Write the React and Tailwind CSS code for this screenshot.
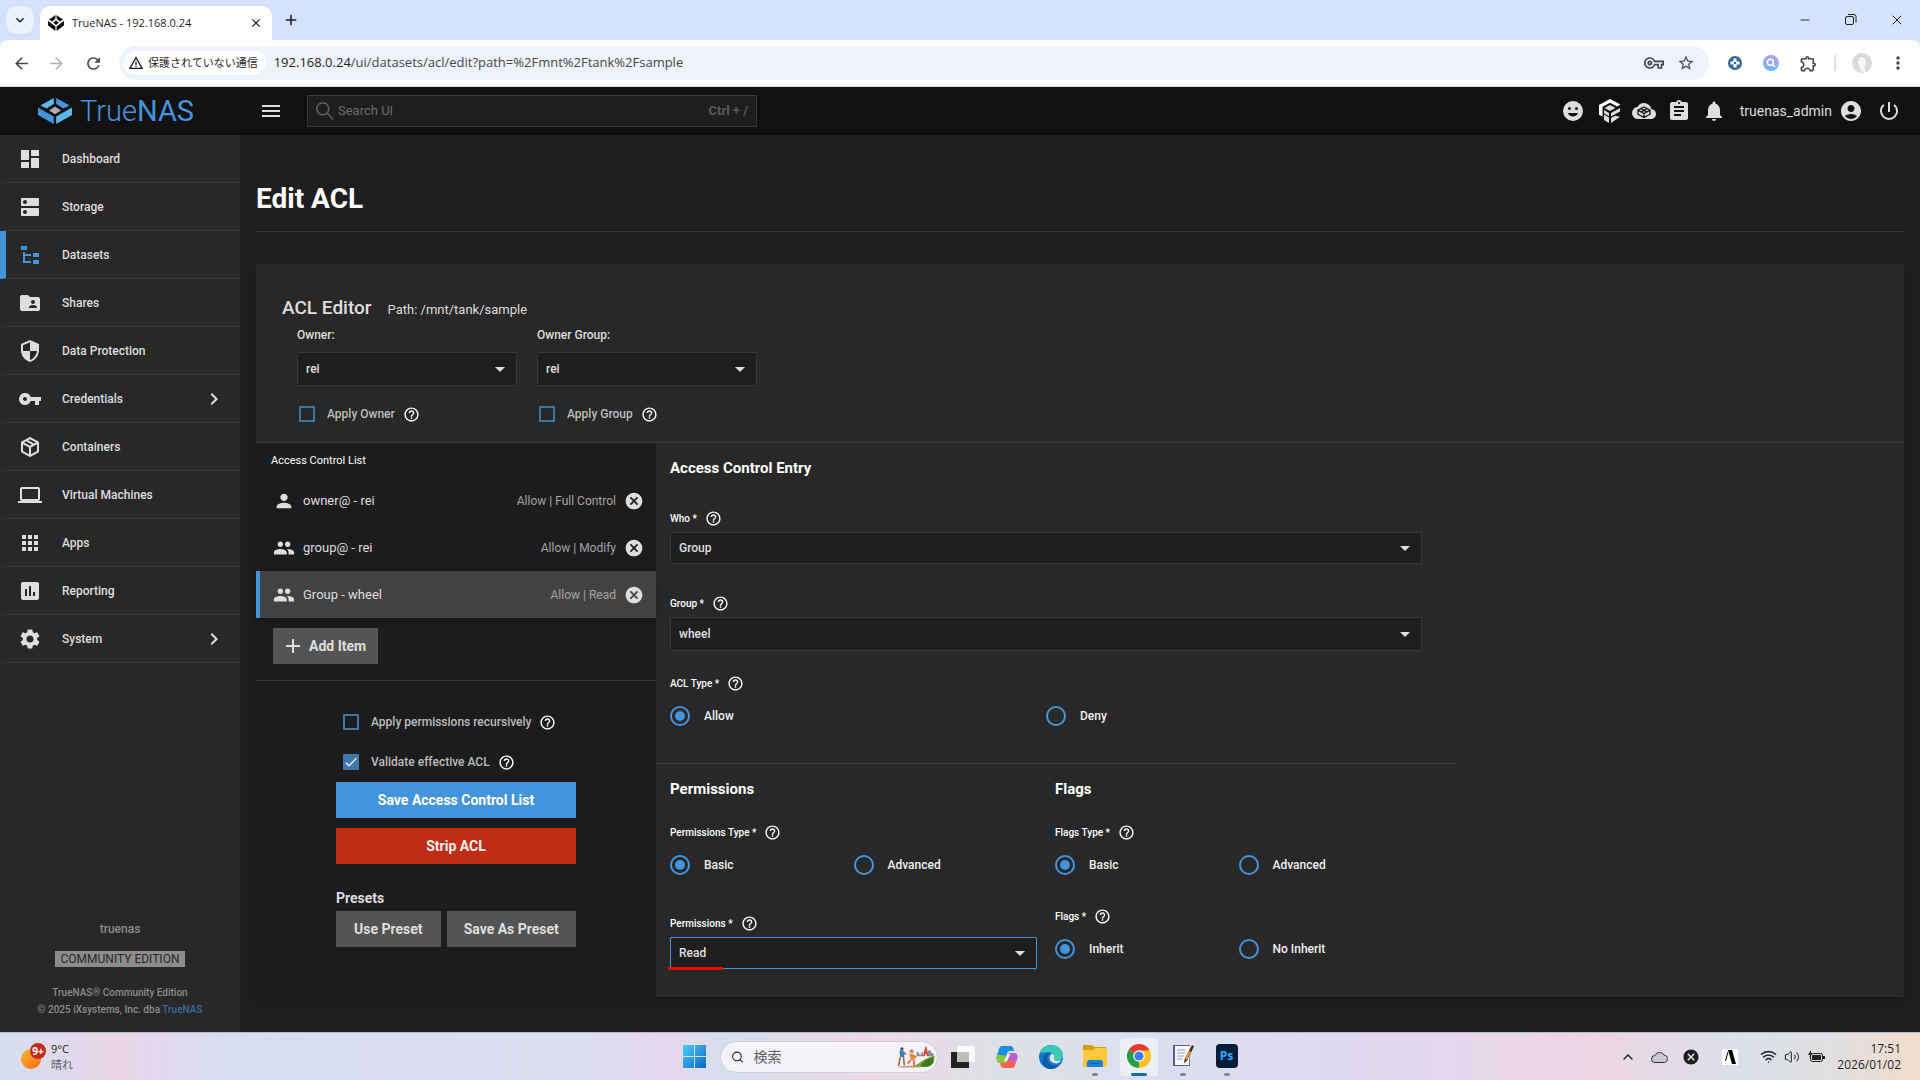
import React, { useState } from "react";
import {
  MdDashboard,
  MdDns,
  MdFolderShared,
  MdSecurity,
  MdVpnKey,
  MdLaptop,
  MdApps,
  MdAssessment,
  MdSettings,
  MdChevronRight,
  MdHelpOutline,
  MdCancel,
  MdPerson,
  MdPeople,
  MdAdd,
  MdMenu,
  MdAssignment,
  MdNotifications,
  MdAccountCircle,
  MdPowerSettingsNew,
  MdArrowBack,
  MdArrowForward,
  MdRefresh,
  MdClose,
  MdMoreVert,
  MdStarOutline,
  MdOutlineExtension,
  MdOutlineVpnKey,
  MdKeyboardArrowDown,
  MdWarningAmber,
} from "react-icons/md";
import { Wifi, Volume2, ChevronUp, Search, Minus, X } from "lucide-react";

const TreeIcon = () => (
  <svg viewBox="0 0 24 24" className="size-6" fill="currentColor">
    <path d="M3,3H9V7H3V3M15,10H21V14H15V10M15,17H21V21H15V17M13,13H7V18H13V20H7L5,20V9H7V11H13V13Z" />
  </svg>
);

const PackageIcon = () => (
  <svg viewBox="0 0 24 24" className="size-6" fill="currentColor">
    <path d="M21,16.5C21,16.88 20.79,17.21 20.47,17.38L12.57,21.82C12.41,21.94 12.21,22 12,22C11.79,22 11.59,21.94 11.43,21.82L3.53,17.38C3.21,17.21 3,16.88 3,16.5V7.5C3,7.12 3.21,6.79 3.53,6.62L11.43,2.18C11.59,2.06 11.79,2 12,2C12.21,2 12.41,2.06 12.57,2.18L20.47,6.62C20.79,6.79 21,7.12 21,7.5V16.5M12,4.15L10.11,5.22L16,8.61L17.96,7.5L12,4.15M6.04,7.5L12,10.85L13.96,9.75L8.08,6.35L6.04,7.5M5,15.91L11,19.29V12.58L5,9.21V15.91M19,15.91V9.21L13,12.58V19.29L19,15.91Z" />
  </svg>
);

const navItems = [
  { label: "Dashboard", icon: <MdDashboard size={24} /> },
  { label: "Storage", icon: <MdDns size={24} /> },
  { label: "Datasets", icon: <TreeIcon />, active: true },
  { label: "Shares", icon: <MdFolderShared size={24} /> },
  { label: "Data Protection", icon: <MdSecurity size={24} /> },
  { label: "Credentials", icon: <MdVpnKey size={24} />, children: true },
  { label: "Containers", icon: <PackageIcon /> },
  { label: "Virtual Machines", icon: <MdLaptop size={24} /> },
  { label: "Apps", icon: <MdApps size={24} /> },
  { label: "Reporting", icon: <MdAssessment size={24} /> },
  { label: "System", icon: <MdSettings size={24} />, children: true },
];

const entries = [
  { name: "owner@ - rei", access: "Allow | Full Control", icon: <MdPerson size={22} /> },
  { name: "group@ - rei", access: "Allow | Modify", icon: <MdPeople size={22} /> },
  { name: "Group - wheel", access: "Allow | Read", icon: <MdPeople size={22} /> },
];

function Cube({ className, colors }) {
  return (
    <svg viewBox="0 0 34 26" className={className} preserveAspectRatio="none">
      <path d="M15.8 0 L15.8 6 L8.6 10.6 L2.4 7.4 Z" fill={colors[0]} />
      <path d="M18.2 0 L31.6 7.4 L25.4 10.6 L18.2 6 Z" fill={colors[1]} />
      <path d="M0 9.4 L15.8 18.6 L15.8 26 L0 17 Z" fill={colors[1]} />
      <path d="M34 9.4 L18.2 18.6 L18.2 26 L34 17 Z" fill={colors[0]} />
      <path d="M17 8.6 L23 12.4 L17 16.2 L11 12.4 Z" fill={colors[2]} />
    </svg>
  );
}

function BrowserChrome() {
  return (
    <div className="bg-[#d5e2fe] font-['Open_Sans','Noto_Sans_CJK_JP',sans-serif] text-[#1f1f1f]">
      <div className="flex h-10 items-end pl-[6px]">
        <button
          aria-label="Search tabs"
          className="mb-[6px] mr-[6px] flex h-7 w-7 items-center justify-center rounded-[10px] bg-[#e9f0fe]"
        >
          <MdKeyboardArrowDown size={16} />
        </button>
        <div className="flex h-[34px] w-[232px] items-center rounded-t-[10px] bg-white pl-2 pr-[9px]">
          <Cube className="h-4 w-4" colors={["#111", "#111", "#111"]} />
          <span className="ml-2 grow text-[11px]">TrueNAS - 192.168.0.24</span>
          <button aria-label="Close tab">
            <MdClose size={14} />
          </button>
        </div>
        <button aria-label="New tab" className="mb-[11px] ml-[10px]">
          <MdAdd size={18} />
        </button>
        <div className="grow" />
        <button aria-label="Minimize" className="flex h-10 w-[46px] items-center justify-center">
          <Minus size={14} strokeWidth={1.5} />
        </button>
        <button aria-label="Restore" className="flex h-10 w-[46px] items-center justify-center">
          <svg viewBox="0 0 12 12" className="size-3" fill="none" stroke="currentColor">
            <rect x="0.5" y="2.5" width="8" height="8" rx="1.5" />
            <path d="M3 .5h6a2 2 0 0 1 2 2v6" />
          </svg>
        </button>
        <button aria-label="Close" className="flex h-10 w-[46px] items-center justify-center">
          <X size={16} strokeWidth={1.5} />
        </button>
      </div>
      <div className="flex h-[47px] items-center rounded-t-[8px] border-b border-[#dadce0] bg-white px-3 text-[#474747]">
        <button aria-label="Back">
          <MdArrowBack size={19} />
        </button>
        <button aria-label="Forward" className="ml-4 text-[#b0b0b0]">
          <MdArrowForward size={19} />
        </button>
        <button aria-label="Reload" className="ml-[18px]">
          <MdRefresh size={19} />
        </button>
        <div className="ml-4 flex h-[34px] grow items-center rounded-full bg-[#edf2fb] pl-[5px] pr-[14px]">
          <span className="flex h-6 items-center rounded-full bg-white pl-1 pr-2 text-[11px] text-[#1f1f1f]">
            <MdWarningAmber size={16} className="mr-1" />
            保護されていない通信
          </span>
          <span className="ml-2 grow text-[13px] text-[#474747]">
            <span className="text-[#1f1f1f]">192.168.0.24</span>
            /ui/datasets/acl/edit?path=%2Fmnt%2Ftank%2Fsample
          </span>
          <MdOutlineVpnKey size={20} />
          <MdStarOutline size={18} className="ml-[13px]" />
        </div>
        <svg viewBox="0 0 14 14" className="ml-[19px] size-[14px]">
          <circle cx="7" cy="7" r="7" fill="#336699" />
          <path d="M5.4 2.5h3.2v2.9h2.9v3.2H8.6v2.9H5.4V8.6H2.5V5.4h2.9z" fill="#fff" />
          <circle cx="7" cy="7" r="1.3" fill="#336699" />
        </svg>
        <svg viewBox="0 0 16 16" className="ml-[21px] size-4">
          <defs>
            <linearGradient id="ext" x1="0" y1="0" x2="0" y2="1">
              <stop offset="0" stopColor="#b79cf5" />
              <stop offset="1" stopColor="#6cb8fb" />
            </linearGradient>
          </defs>
          <circle cx="8" cy="8" r="8" fill="url(#ext)" />
          <circle cx="7.3" cy="7.3" r="3" fill="none" stroke="#fff" strokeWidth="1.5" />
          <path d="M9.5 9.5l2.5 2.5" stroke="#fff" strokeWidth="1.5" />
        </svg>
        <MdOutlineExtension size={19} className="ml-5" />
        <span className="ml-4 h-4 w-[2px] bg-[#d3e3fd]" />
        <svg viewBox="0 0 20 20" className="ml-4 size-5">
          <circle cx="10" cy="10" r="10" fill="#d9d9d9" />
          <path d="M10 4c3 0 4 2 4 5 0 2-1 3-1.5 4l1 6h-4L7.500 14C6.500 12 6 11 6 9c0-3 1-5 4-5z" fill="#f5f5f5" />
        </svg>
        <MdMoreVert size={20} className="ml-4" />
      </div>
    </div>
  );
}

function TopBar() {
  return (
    <header className="flex h-12 shrink-0 items-center bg-[#111111] pr-[19px] text-[#dedede]">
      <a href="#home" className="flex w-60 items-center pl-[38px] text-[29px] leading-10 text-[#4494dc]">
        <Cube className="mr-2 h-[26px] w-[34px]" colors={["#5bb9ea", "#4494dc", "#aeadae"]} />
        <span className="font-light">True</span>NAS
      </a>
      <button aria-label="Toggle menu" className="ml-[19px]">
        <MdMenu size={24} />
      </button>
      <label className="ml-6 flex h-8 w-[450px] items-center border border-[#383838] bg-[#1e1e1e] px-2 text-[#6c6c6c]">
        <svg viewBox="0 0 18 18" className="size-[18px]" fill="none" stroke="#5f5f5f" strokeWidth="1.6">
          <circle cx="6.8" cy="6.8" r="6" />
          <path d="M11.2 11.2l6 6" />
        </svg>
        <input
          aria-label="Search UI"
          placeholder="Search UI"
          className="ml-1 min-w-0 grow bg-transparent text-[13px] placeholder:text-[#6c6c6c]"
        />
        <span className="text-[13px] font-bold text-[#5a5a5a]">Ctrl + /</span>
      </label>
      <div className="grow" />
      <div className="flex items-center">
        <button aria-label="Feedback">
          <svg viewBox="0 0 24 24" className="size-6" fill="currentColor" fillRule="evenodd">
            <path d="M12 2a10 10 0 1 0 0 20a10 10 0 1 0 0-20zM8.5 8a1.5 1.5 0 1 1 0 3a1.5 1.5 0 1 1 0-3zM15.5 8a1.5 1.5 0 1 1 0 3a1.5 1.5 0 1 1 0-3zM6.9 14h10.2a5.5 5.5 0 0 1-10.2 0z" />
          </svg>
        </button>
        <button aria-label="TrueCommand" className="ml-[14px]">
          <svg viewBox="0 0 22 24" className="h-6 w-[22px]">
            <path d="M11 0L21.5 5.5L18 7.5L11 3.8L3.5 7.8V17.5L0 15.7V6z" fill="#fff" />
            <path d="M11 6l5.5 3-5.5 3-5.5-3z" fill="#dedede" />
            <path d="M5 11l5 3v3.2l-5-3zM5 15.5l5 3V24l-5-3zM12 14l9-5v3.4l-9 5zM12 19l4-2.3 5 1L12 24z" fill="#dedede" />
          </svg>
        </button>
        <button aria-label="TrueNAS Connect" className="ml-[11px]">
          <svg viewBox="0 0 24 24" className="size-6" fill="currentColor">
            <path d="M19.35 10.04A7.49 7.49 0 0 0 12 4C9.11 4 6.6 5.64 5.35 8.04A5.994 5.994 0 0 0 0 14c0 3.31 2.69 6 6 6h13c2.76 0 5-2.24 5-5 0-2.64-2.05-4.78-4.65-4.96z" />
            <path
              d="M12 8l6 3.2v4L12 18.5l-6-3.3v-4zM6 11.2l6 3.3 6-3.3M12 14.5v4M9 9.6l6 3.4M15 9.6L9 13"
              fill="none"
              stroke="#111"
              strokeWidth="1.3"
            />
          </svg>
        </button>
        <button aria-label="Jobs" className="ml-[11px]">
          <MdAssignment size={24} />
        </button>
        <button aria-label="Alerts" className="ml-[11px]">
          <MdNotifications size={24} />
        </button>
        <button className="ml-[14px] flex items-center text-[14px]">
          truenas_admin
          <MdAccountCircle size={24} className="ml-[7px]" />
        </button>
        <button aria-label="Power" className="ml-[14px]">
          <MdPowerSettingsNew size={24} />
        </button>
      </div>
    </header>
  );
}

function Sidebar() {
  return (
    <aside className="flex w-60 shrink-0 flex-col bg-[#282828] text-[12px] font-medium text-[#dedede] shadow-lg">
      <nav>
        {navItems.map((item) => (
          <a
            key={item.label}
            href={`#${item.label}`}
            className={`flex h-12 items-center border-b border-b-[#383838] border-l-[6px] pr-[14px] pl-3 ${
              item.active ? "border-l-[#4494dc]" : "border-l-[#282828]"
            }`}
          >
            <span className={item.active ? "text-[#4494dc]" : ""}>{item.icon}</span>
            <span className="ml-5 grow">{item.label}</span>
            {item.children && <MdChevronRight size={24} />}
          </a>
        ))}
      </nav>
      <div className="mt-auto flex flex-col items-center pb-[14px] text-[#8c8c8c]">
        <span className="leading-5">truenas</span>
        <span className="mt-3 bg-[#8c8c8c] px-[6px] leading-4 font-normal text-[#282828]">COMMUNITY EDITION</span>
        <span className="mt-[17px] text-[10px] leading-[17px]">TrueNAS® Community Edition</span>
        <span className="text-[10px] leading-[17px]">
          © 2025 iXsystems, Inc. dba{" "}
          <a href="#truenas" className="text-[#386d9c]">
            TrueNAS
          </a>
        </span>
      </div>
    </aside>
  );
}

function Help() {
  return (
    <button aria-label="Help" className="ml-2 text-white">
      <MdHelpOutline size={17} />
    </button>
  );
}

function Select({ id, value, className = "h-8", focused = false }) {
  return (
    <div className="grid items-center">
      <select
        id={id}
        defaultValue={value}
        className={`col-start-1 row-start-1 w-full appearance-none rounded-[1px] border bg-[#1e1e1e] px-2 text-[12px] font-medium text-[#dedede] outline-none ${
          focused ? "border-[#4494dc]" : "border-[#383838]"
        } ${className}`}
      >
        <option>{value}</option>
      </select>
      <svg
        viewBox="0 0 10 5"
        className="pointer-events-none col-start-1 row-start-1 mr-3 h-[5px] w-[10px] justify-self-end"
        fill="#dedede"
      >
        <path d="M0 0h10L5 5z" />
      </svg>
    </div>
  );
}

function Checkbox({ id, label, checked = false }) {
  return (
    <div className="flex h-4 items-center">
      <span className="grid size-4">
        <input
          id={id}
          type="checkbox"
          defaultChecked={checked}
          className="peer col-start-1 row-start-1 size-4 appearance-none rounded-[1px] border-2 border-[#3b77ab] checked:bg-[#3b77ab]"
        />
        <svg
          viewBox="0 0 24 24"
          className="pointer-events-none invisible col-start-1 row-start-1 size-4 peer-checked:visible"
          fill="none"
          stroke="#dedede"
          strokeWidth="2.5"
        >
          <path d="M4 12.7L9 17.7 20.3 6" />
        </svg>
      </span>
      <label htmlFor={id} className="ml-3 text-[12px] font-medium text-[#bdbdbd]">
        {label}
      </label>
      <Help />
    </div>
  );
}

function FieldLabel({ htmlFor, children, className }) {
  return (
    <div className={`flex h-[18px] items-center text-[10px] font-medium text-white ${className}`}>
      {htmlFor ? <label htmlFor={htmlFor}>{children} *</label> : <span>{children} *</span>}
      <Help />
    </div>
  );
}

function RadioPair({ name, options }) {
  const [value, setValue] = useState(options[0]);

  return (
    <div className="mt-[14px] grid grid-cols-2" role="radiogroup" aria-label={name}>
      {options.map((option) => (
        <label key={option} className="flex h-5 items-center text-[12px] font-medium text-[#f0f0f0]">
          <input
            type="radio"
            name={name}
            checked={value === option}
            onChange={() => setValue(option)}
            className="mr-[14px] grid size-5 appearance-none place-items-center rounded-full border-2 border-[#4494dc] before:size-[10px] before:rounded-full checked:before:bg-[#4494dc] checked:before:content-['']"
          />
          {option}
        </label>
      ))}
    </div>
  );
}

function AclList() {
  const [selected, setSelected] = useState(2);

  return (
    <section className="w-[400px] shrink-0 bg-[#1c1c1c]">
      <h3 className="pt-2 pl-[15px] text-[11px] leading-5 text-white">Access Control List</h3>
      <ul className="mt-[6px]">
        {entries.map((entry, i) => (
          <li
            key={entry.name}
            onClick={() => setSelected(i)}
            className={`flex h-[47px] items-center border-l-4 pr-3 pl-[13px] text-[#dedede] ${
              selected === i ? "border-[#4494dc] bg-[#424242] shadow-md" : "border-transparent"
            }`}
          >
            {entry.icon}
            <span className="ml-2 grow text-[13px]">{entry.name}</span>
            <span className="text-[12px] text-[#a3a3a3]">{entry.access}</span>
            <button aria-label={`Remove ${entry.name}`} className="ml-2">
              <MdCancel size={20} />
            </button>
          </li>
        ))}
      </ul>
      <div className="border-b border-[#383838] pt-[10px] pb-4 pl-[17px]">
        <button className="flex h-9 items-center bg-[#545454] pr-3 pl-2 text-[14px] font-bold text-[#dedede]">
          <MdAdd size={24} className="mr-1" />
          Add Item
        </button>
      </div>
      <div className="px-20 pt-[33px] pb-[50px]">
        <div className="flex flex-col gap-6 pl-[7px]">
          <Checkbox id="recursive" label="Apply permissions recursively" />
          <Checkbox id="validate" label="Validate effective ACL" checked />
        </div>
        <button className="mt-3 block h-9 w-full bg-[#4494dc] text-[14px] font-bold text-white">
          Save Access Control List
        </button>
        <button className="mt-[10px] block h-9 w-full bg-[#bf2d16] text-[14px] font-bold text-[#f0f0f0]">
          Strip ACL
        </button>
        <h4 className="mt-6 text-[14px] leading-5 font-bold text-[#dedede]">Presets</h4>
        <div className="mt-[3px] flex gap-[6px] text-[14px] font-bold text-[#dedede]">
          <button className="h-9 bg-[#545454] px-[18px]">Use Preset</button>
          <button className="h-9 grow bg-[#545454]">Save As Preset</button>
        </div>
      </div>
    </section>
  );
}

function EntryForm() {
  return (
    <form className="max-w-[800px] grow text-white">
      <div className="border-b border-[#383838] pt-[13px] pr-[34px] pb-[37px] pl-[14px]">
        <h3 className="text-[15px] leading-6 font-bold">Access Control Entry</h3>
        <FieldLabel htmlFor="who" className="mt-[29px] mb-[5px]">
          Who
        </FieldLabel>
        <Select id="who" value="Group" />
        <FieldLabel htmlFor="group" className="mt-[30px] mb-[5px]">
          Group
        </FieldLabel>
        <Select id="group" value="wheel" className="h-[34px]" />
        <FieldLabel className="mt-[23px]">ACL Type</FieldLabel>
        <RadioPair name="ACL Type" options={["Allow", "Deny"]} />
      </div>
      <div className="grid grid-cols-2 gap-[18px] pt-[13px] pr-[34px] pl-[14px]">
        <div>
          <h3 className="text-[15px] leading-6 font-bold">Permissions</h3>
          <FieldLabel className="mt-[22px]">Permissions Type</FieldLabel>
          <RadioPair name="Permissions Type" options={["Basic", "Advanced"]} />
          <FieldLabel htmlFor="perms" className="mt-[39px] mb-[5px]">
            Permissions
          </FieldLabel>
          <div className="relative">
            <Select id="perms" value="Read" focused />
            <span className="absolute -bottom-px -left-[2px] h-[3px] w-[55px] bg-[#ff0000]" />
          </div>
        </div>
        <div>
          <h3 className="text-[15px] leading-6 font-bold">Flags</h3>
          <FieldLabel className="mt-[22px]">Flags Type</FieldLabel>
          <RadioPair name="Flags Type" options={["Basic", "Advanced"]} />
          <FieldLabel className="mt-8">Flags</FieldLabel>
          <RadioPair name="Flags" options={["Inherit", "No Inherit"]} />
        </div>
      </div>
    </form>
  );
}

function OwnerField({ id, label, apply }) {
  return (
    <div className="w-[220px]">
      <label htmlFor={id} className="block text-[12px] leading-[22px] font-medium">
        {label}
      </label>
      <div className="mt-[6px] mb-5">
        <Select id={id} value="rei" className="h-[34px]" />
      </div>
      <div className="pl-[2px]">
        <Checkbox id={`${id}-apply`} label={apply} />
      </div>
    </div>
  );
}

function EditAcl() {
  return (
    <main className="grow bg-[#1e1e1e] px-4 pt-11 text-[#dedede]">
      <h1 className="border-b border-[#383838] pb-3 text-[28px] leading-10 font-bold text-white">Edit ACL</h1>
      <div className="mt-8 bg-[#282828] shadow-md">
        <div className="border-b border-[#383838] px-[26px] pt-8 pb-5">
          <div className="flex h-7 items-baseline">
            <h2 className="text-[19px] leading-6 font-medium">ACL Editor</h2>
            <span className="ml-4 text-[13px]">Path: /mnt/tank/sample</span>
          </div>
          <div className="flex gap-5 pl-[15px]">
            <OwnerField id="owner" label="Owner:" apply="Apply Owner" />
            <OwnerField id="owner-group" label="Owner Group:" apply="Apply Group" />
          </div>
        </div>
        <div className="flex">
          <AclList />
          <EntryForm />
        </div>
      </div>
    </main>
  );
}

function TaskbarApp({ label, children }) {
  return (
    <button aria-label={label} className="flex h-[38px] w-11 flex-col items-center justify-end gap-[5px]">
      {children}
      <span className="h-[3px] w-[6px] rounded-full bg-[#858891]" />
    </button>
  );
}

function Taskbar() {
  return (
    <footer className="flex h-12 shrink-0 items-center border-t border-[#b8bcc8] bg-linear-[90deg,#d5deec_0%,#e8d6e8_6%,#d8def0_12%,#dcdff0_30%,#e4d8ea_35%,#d6e0ec_38%,#ecd8e6_45%,#dde1e4_52%,#dcdff0_60%,#dfd9ef_70%,#ecd6e4_83%,#dae1e8_91%,#e2dfe0_96%,#f1dccb_100%] pr-[19px] pl-5 font-['Open_Sans','Noto_Sans_CJK_JP',sans-serif] text-[#1f1f1f]">
      <div className="flex flex-1 items-center">
        <svg viewBox="0 0 26 28" className="h-7 w-[26px]">
          <defs>
            <linearGradient id="sun" x1="0" y1="0" x2="1" y2="1">
              <stop offset="0" stopColor="#f6b92e" />
              <stop offset="1" stopColor="#f56a10" />
            </linearGradient>
          </defs>
          <circle cx="11" cy="16" r="10" fill="url(#sun)" />
          <circle cx="18" cy="8" r="8" fill="#c42b1c" />
          <text x="18" y="12" fontSize="10" fontWeight="700" textAnchor="middle" fill="#fff">
            9+
          </text>
        </svg>
        <div className="ml-[5px] text-[11px] leading-4">
          <div>9°C</div>
          <div className="text-[#5c5f66]">晴れ</div>
        </div>
      </div>
      <div className="flex items-center pl-[10px]">
        <button aria-label="Start">
          <svg viewBox="0 0 23 23" className="size-[23px]">
            <defs>
              <linearGradient id="win" x1="0" y1="0" x2="1" y2="1">
                <stop offset="0" stopColor="#4fcbfb" />
                <stop offset="1" stopColor="#0669c9" />
              </linearGradient>
            </defs>
            <path d="M0 0h11v11H0zM12 0h11v11H12zM0 12h11v11H0zM12 12h11v11H12z" fill="url(#win)" />
          </svg>
        </button>
        <label className="ml-[14px] flex h-8 w-[218px] items-center rounded-full border border-[#cfd0da] bg-[#f6f3f8] pr-[2px] pl-[10px]">
          <Search size={16} strokeWidth={2} />
          <input
            aria-label="検索"
            placeholder="検索"
            className="ml-[10px] min-w-0 grow bg-transparent text-[14px] placeholder:text-[#5c5f66]"
          />
          <svg viewBox="0 0 46 28" className="h-7 w-[46px]">
            <path d="M18 26c8-2 14-10 28-14 1 8-3 14-10 14z" fill="#6a9c2e" />
            <path d="M30 26c0-6 6-9 14-11l1 5c-2 4-5 6-9 6z" fill="#3d7a1f" />
            <path d="M24 13v-5h3v3h3V8h2v5zM38 13V6h4v3h3v4z" fill="#8a8f96" />
            <path d="M35 1l1 0 3 12h-2l-1-4-2 4h-2z" fill="#d8402f" />
            <path d="M0 27c6-3 18-3 30 0z" fill="#b69b83" />
            <circle cx="6" cy="4" r="2" fill="#5b4a3c" />
            <path d="M3 6h5l1 8H4z" fill="#2d83c6" />
            <path d="M4 14l-2 11M8 14l1 10M8 8l3 3" stroke="#a8653b" strokeWidth="2" />
            <circle cx="18" cy="7" r="2.5" fill="#c98a5b" />
            <path d="M15 10h5l2 8h-5z" fill="#f08a3c" />
            <path d="M17 18l-4 4M21 18v8M20 12l4 3" stroke="#e07b3c" strokeWidth="2.5" />
          </svg>
        </label>
        <button aria-label="Task view" className="ml-[13px]">
          <svg viewBox="0 0 24 22" className="h-[22px] w-6">
            <path d="M0 6h18v16H0z" fill="#222" />
            <path d="M6 0h18v16H6z" fill="#fafafa" />
            <path d="M6 6h12v10H6z" fill="#bdbdbd" />
          </svg>
        </button>
        <button aria-label="Copilot" className="ml-5">
          <svg viewBox="0 0 24 24" className="size-6">
            <path d="M7 1h8c2 0 3 1 3.5 3l.5 2h-4c-2 0-2.5 1-3 3l-2 7H5c-3 0-4-3-3-6l2-6c.5-2 1.5-3 3-3z" fill="#1b8ee0" />
            <path d="M2.5 9.5L1.5 13c-.5 2 .5 5 3 5h5.5l2-7z" fill="#8cc63f" />
            <path d="M17 23H9c-2 0-3-1-3.5-3L5 18h4c2 0 2.5-1 3-3l2-7h5c3 0 4 3 3 6l-2 6c-.5 2-1.5 3-3 3z" fill="#f2644d" />
            <path d="M14 8h5c3 0 4 3 3 6l-.5 2H12z" fill="#b95ce0" />
            <path d="M12.5 9h3L12 16H9z" fill="#f4f4f8" />
          </svg>
        </button>
        <button aria-label="Edge" className="ml-5">
          <svg viewBox="0 0 24 24" className="size-6">
            <circle cx="12" cy="12" r="12" fill="#1179cf" />
            <path d="M1 8C3 3 7 0 12 0c7 0 12 5 12 10 0 4-3 6-6 6-2 0-4-1-3-3 1-3-2-6-6-6-4 0-7 1-8 1z" fill="#3bc8b4" />
            <path d="M12 8c-4 1-5 5-3 9 2 3 6 5 11 3-3 3-6 4-9 4-6-1-8-6-7-10 1-4 4-6 8-6z" fill="#0c59a4" />
            <path d="M12 9c3 0 4 2 3 4-1 3 3 4 7 2-1 3-4 4-7 3-4-1-6-5-3-9z" fill="#e3e3ec" />
          </svg>
        </button>
        <div className="ml-[10px] flex items-center">
          <TaskbarApp label="Explorer">
            <svg viewBox="0 0 24 24" className="size-6">
              <path d="M0 1h9l2 2h12v8H0z" fill="#d99a12" />
              <path d="M0 6h10l2-2h12v19H0z" fill="#fcc93d" />
              <path d="M4 23v-5c0-1 1-2 2-2h12c1 0 2 1 2 2v5z" fill="#1583d8" />
              <path d="M8 19h8v1H8z" fill="#0a5ba5" />
            </svg>
          </TaskbarApp>
          <div className="mx-[3px] flex h-[38px] w-[38px] flex-col items-center justify-end gap-[5px] rounded-[4px] bg-[#eeeff6]">
            <svg viewBox="0 0 24 24" className="size-6">
              <path d="M12 12L1.6 6A12 12 0 0 1 22.4 6z" fill="#e33b2e" />
              <path d="M12 12L22.4 6A12 12 0 0 1 12 24z" fill="#fcc31e" />
              <path d="M12 12L12 24A12 12 0 0 1 1.6 6z" fill="#24a148" />
              <path d="M12 6.5h10.6L12 24l4-9z" fill="#fcc31e" />
              <circle cx="12" cy="12" r="5.8" fill="#fff" />
              <circle cx="12" cy="12" r="4.6" fill="#3b7ded" />
            </svg>
            <span className="h-[3px] w-4 rounded-full bg-[#0f6cbd]" />
          </div>
          <TaskbarApp label="Editor">
            <svg viewBox="0 0 22 24" className="h-6 w-[22px]">
              <path d="M1 1h17v21H1z" fill="#5d5a8c" />
              <path d="M3 2h15l-1 19H3z" fill="#f7f7ff" />
              <path d="M5 6h8M5 9h8M5 12h7M5 15h5" stroke="#9a9ac0" />
              <path d="M20 1l2 1.500-7 14-3 3 .5-4z" fill="#4a2c14" />
              <path d="M17 7l2 1-4 8-2-1z" fill="#e6902e" />
            </svg>
          </TaskbarApp>
          <TaskbarApp label="Photoshop">
            <span className="flex h-6 w-[22px] items-center justify-center rounded-[4px] bg-[#001e36] text-[12px] leading-none font-bold text-[#31a8ff]">
              Ps
            </span>
          </TaskbarApp>
        </div>
      </div>
      <div className="flex flex-1 items-center justify-end">
        <ChevronUp size={16} />
        <svg viewBox="0 0 18 12" className="ml-[15px] h-3 w-[18px]">
          <path d="M4 11.5A3.5 3.5 0 0 1 4 4.5 5 5 0 0 1 13 4a3.8 3.8 0 0 1 .5 7.5z" fill="#c8ccd0" stroke="#333" />
        </svg>
        <MdCancel size={18} className="ml-[13px]" />
        <svg viewBox="0 0 16 16" className="ml-[22px] size-4">
          <path d="M0 0h16v16H0z" fill="#fff" />
          <path d="M6 1h4l4 14h-4z" fill="#000" />
          <path d="M6 3L3.5 12" stroke="#000" />
        </svg>
        <Wifi size={17} className="ml-[22px]" />
        <Volume2 size={16} strokeWidth={1.5} className="ml-[7px]" />
        <svg viewBox="0 0 17 13" className="ml-2 h-[13px] w-[17px]">
          <rect x="2.5" y="3.5" width="12" height="8" rx="2" fill="none" stroke="#1f1f1f" />
          <rect x="4" y="5" width="9" height="5" fill="#1f1f1f" />
          <path d="M15 6h2v3h-2zM3 0L0 5h2L1 8l4-5H3z" fill="#1f1f1f" />
        </svg>
        <div className="ml-3 text-right text-[12px] leading-4">
          <div>17:51</div>
          <div>2026/01/02</div>
        </div>
      </div>
    </footer>
  );
}

export default function App() {
  return (
    <div className="flex min-h-screen flex-col">
      <BrowserChrome />
      <div className="flex grow flex-col font-['Roboto','Liberation_Sans',sans-serif]">
        <TopBar />
        <div className="flex grow">
          <Sidebar />
          <EditAcl />
        </div>
      </div>
      <Taskbar />
    </div>
  );
}
